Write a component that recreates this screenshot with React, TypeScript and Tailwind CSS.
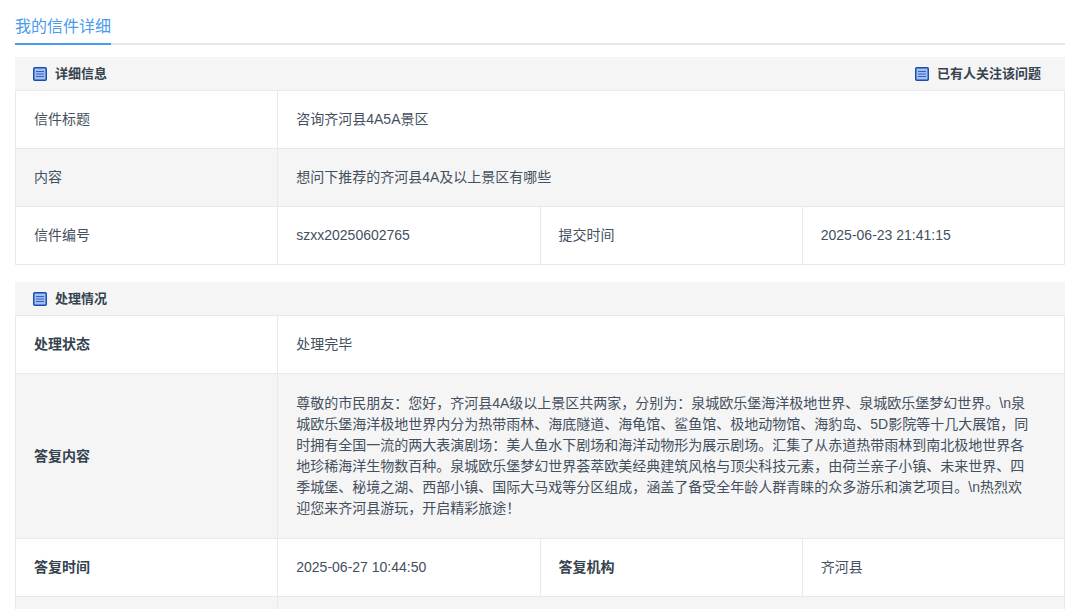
import { ReactNode } from 'react';

const letter = {
    title: '咨询齐河县4A5A景区',
    content: '想问下推荐的齐河县4A及以上景区有哪些',
    code: 'szxx20250602765',
    submitTime: '2025-06-23 21:41:15',
};

const reply = {
    status: '处理完毕',
    content: '尊敬的市民朋友：您好，齐河县4A级以上景区共两家，分别为：泉城欧乐堡海洋极地世界、泉城欧乐堡梦幻世界。\\n泉城欧乐堡海洋极地世界内分为热带雨林、海底隧道、海龟馆、鲨鱼馆、极地动物馆、海豹岛、5D影院等十几大展馆，同时拥有全国一流的两大表演剧场：美人鱼水下剧场和海洋动物形为展示剧场。汇集了从赤道热带雨林到南北极地世界各地珍稀海洋生物数百种。泉城欧乐堡梦幻世界荟萃欧美经典建筑风格与顶尖科技元素，由荷兰亲子小镇、未来世界、四季城堡、秘境之湖、西部小镇、国际大马戏等分区组成，涵盖了备受全年龄人群青睐的众多游乐和演艺项目。\\n热烈欢迎您来齐河县游玩，开启精彩旅途！',
    time: '2025-06-27 10:44:50',
    org: '齐河县',
};

const cell = 'border border-[#e9e9eb] px-[18px] py-[18px] text-left';

const ListIcon = () => (
    <svg width="14" height="14" viewBox="0 0 14 14" aria-hidden="true" className="shrink-0">
        <rect x="0.75" y="0.75" width="12.5" height="12.5" rx="1" fill="#a3bff2" stroke="#1a4cad" strokeWidth="1.5" />
        <path d="M3 4.5h8M3 7h8M3 9.5h8" stroke="#2f62bd" strokeWidth="1" />
    </svg>
);

const BarTitle = ({ children }: { children: ReactNode }) => (
    <h2 className="flex items-center gap-2 text-[13px] leading-5 font-bold text-[#35434f]">
        <ListIcon />
        {children}
    </h2>
);

// grey bar on top of each table
const SectionBar = ({ title, extra }: { title: string; extra?: string }) => (
    <div className="flex h-[33px] items-center justify-between bg-[#f5f5f5] pr-6 pl-[18px]">
        <BarTitle>{title}</BarTitle>
        {extra && <BarTitle>{extra}</BarTitle>}
    </div>
);

const Columns = () => (
    <colgroup>
        <col className="w-1/4" />
        <col className="w-1/4" />
        <col className="w-1/4" />
        <col className="w-1/4" />
    </colgroup>
);

const App = () => {
    return (
        <main className="h-screen overflow-hidden bg-white px-[15px] pt-2 font-['Liberation_Sans','Noto_Sans_CJK_SC',sans-serif] text-sm leading-[21px] text-[#44505e]">
            <div className="mb-3 flex border-b-2 border-[#e6e6e6]">
                <h1 className="-mb-0.5 border-b-2 border-[#4a9bea] pt-[7px] pb-1 text-base leading-6 text-[#4a9bea]">我的信件详细</h1>
            </div>

            <section className="mb-[17px]">
                <SectionBar title="详细信息" extra="已有人关注该问题" />
                <table className="w-full table-fixed border-collapse">
                    <Columns />
                    <tbody>
                        <tr>
                            <th scope="row" className={`${cell} font-normal`}>信件标题</th>
                            <td colSpan={3} className={cell}>{letter.title}</td>
                        </tr>
                        <tr className="bg-[#f5f5f5]">
                            <th scope="row" className={`${cell} font-normal`}>内容</th>
                            <td colSpan={3} className={cell}>{letter.content}</td>
                        </tr>
                        <tr>
                            <th scope="row" className={`${cell} font-normal`}>信件编号</th>
                            <td className={cell}>{letter.code}</td>
                            <th scope="row" className={`${cell} font-normal`}>提交时间</th>
                            <td className={cell}>{letter.submitTime}</td>
                        </tr>
                    </tbody>
                </table>
            </section>

            <section>
                <SectionBar title="处理情况" />
                <table className="w-full table-fixed border-collapse">
                    <Columns />
                    <tbody>
                        <tr>
                            <th scope="row" className={`${cell} font-bold text-[#35434f]`}>处理状态</th>
                            <td colSpan={3} className={cell}>{reply.status}</td>
                        </tr>
                        <tr className="bg-[#f5f5f5]">
                            <th scope="row" className={`${cell} font-bold text-[#35434f]`}>答复内容</th>
                            <td colSpan={3} className="border border-[#e9e9eb] py-[19px] pr-8 pl-[18px]">{reply.content}</td>
                        </tr>
                        <tr>
                            <th scope="row" className={`${cell} font-bold text-[#35434f]`}>答复时间</th>
                            <td className={cell}>{reply.time}</td>
                            <th scope="row" className={`${cell} font-bold text-[#35434f]`}>答复机构</th>
                            <td className={cell}>{reply.org}</td>
                        </tr>
                        <tr className="bg-[#f5f5f5]">
                            <td className={cell}></td>
                            <td colSpan={3} className={cell}></td>
                        </tr>
                    </tbody>
                </table>
            </section>
        </main>
    );
};

export default App;
